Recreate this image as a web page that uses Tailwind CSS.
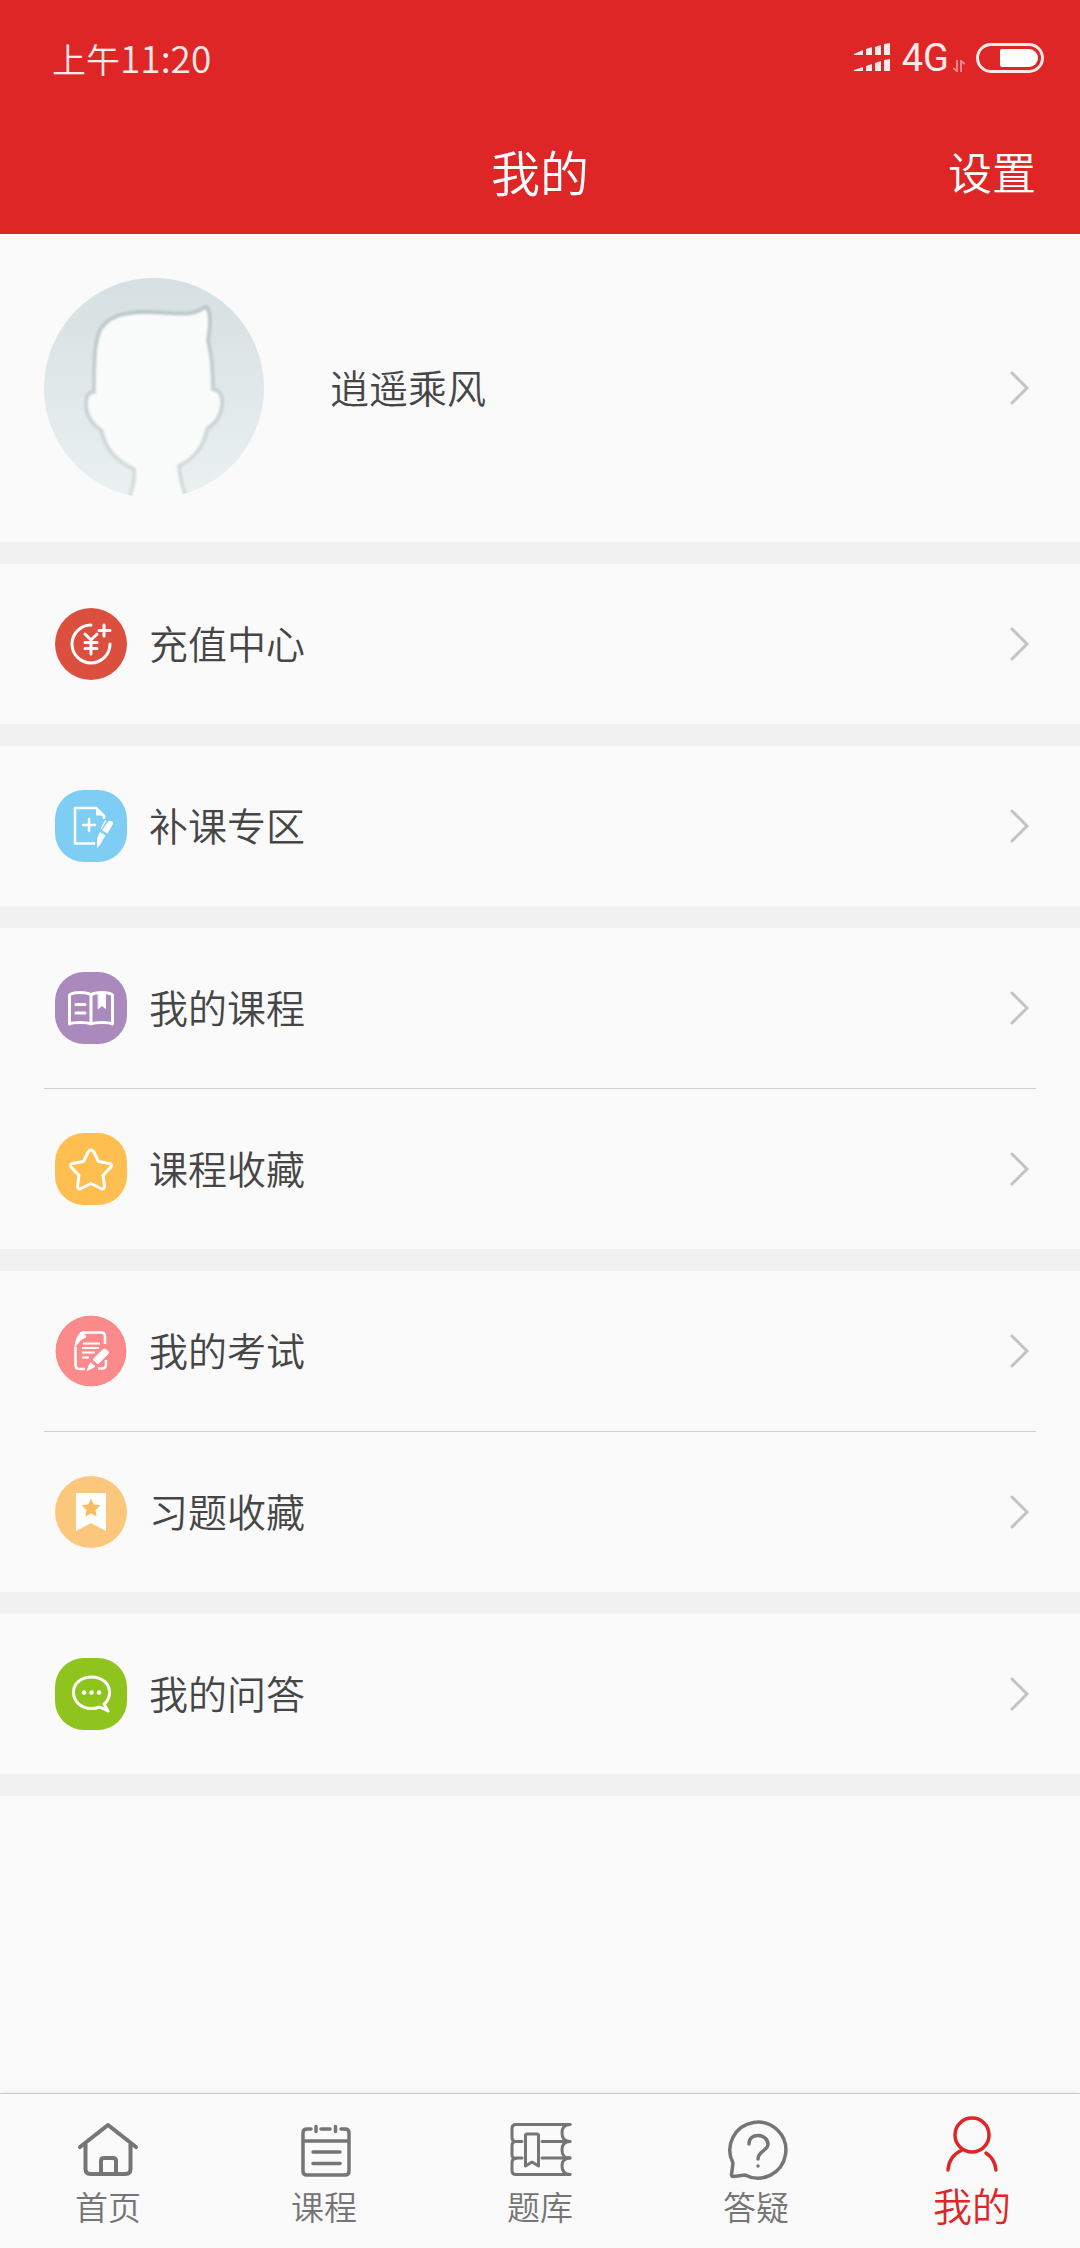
<!DOCTYPE html>
<html lang="zh-CN">
<head>
    <meta charset="UTF-8">
    <meta name="viewport" content="width=device-width, initial-scale=1.0">
    <title>我的</title>
    <script src="https://cdn.jsdelivr.net/npm/@tailwindcss/browser@4"></script>
    <style>
        body { font-family: 'Noto Sans CJK SC', sans-serif; font-weight: 350; }
    </style>
</head>
<body class="bg-[#fafafa] text-[#464646] min-h-screen flex flex-col">

    <!-- Iconos compartidos -->
    <svg class="hidden">
        <symbol id="chevron" viewBox="0 0 20 34">
            <path d="M2 2l15 15L2 32" fill="none" stroke="#c3c3c3" stroke-width="3" stroke-linecap="round"/>
        </symbol>
    </svg>

    <header class="bg-[#de2626] text-white">
        <div class="flex items-center justify-between h-[116px] pl-[52px] pr-9 text-white/90">
            <span class="text-[34px] leading-10">上午<span class="text-[37px]">11:20</span></span>
            <div class="flex items-center">
                <svg class="w-9 h-[30px] mr-3" viewBox="0 0 36 30" fill="currentColor">
                    <path d="M0 11l9-4v5H0zM12 6l6-2v8h-6zM21 4l6-2v10h-6zM30 1l6-1v12h-6z"/>
                    <path d="M0 27l9-3v4H0zM12 23l6-2v7h-6zM21 20l6-2v10h-6zM30 17l6-1v12h-6z"/>
                </svg>
                <span class="font-['Roboto'] font-normal text-[38px] leading-10">4G</span>
                <svg class="w-3 h-3 mt-4 ml-1 opacity-50" viewBox="0 0 12 12" fill="none" stroke="currentColor" stroke-width="2">
                    <path d="M4 0v11L0 8M8 12V1l4 3"/>
                </svg>
                <svg class="w-[68px] h-[30px] ml-[11px]" viewBox="0 0 68 30">
                    <rect x="1.5" y="1.5" width="65" height="27" rx="13.5" fill="none" stroke="currentColor" stroke-width="3"/>
                    <path d="M26 6h27a9 9 0 0 1 0 18H26a2 2 0 0 1-2-2V8a2 2 0 0 1 2-2z" fill="#fff"/>
                </svg>
            </div>
        </div>
        <div class="grid grid-cols-3 items-center h-[118px] px-11 pb-2">
            <h1 class="col-start-2 text-center text-[49px] leading-[60px] font-[350]">我的</h1>
            <button type="button" class="justify-self-end text-[44px] leading-[60px]">设置</button>
        </div>
    </header>

    <main class="flex-1 text-[39px] leading-[56px]">
        <a href="#perfil" class="flex items-center h-[308px] px-11">
            <svg class="w-[220px] h-[220px] rounded-full" viewBox="0 0 220 220">
                <defs>
                    <linearGradient id="fondo" x1="0" y1="0" x2="0" y2="1">
                        <stop offset="0" stop-color="#d6dfe1"/>
                        <stop offset="1" stop-color="#ebf1f1"/>
                    </linearGradient>
                    <linearGradient id="borde" x1="0" y1="0" x2="0" y2="1">
                        <stop offset="0" stop-color="#bac7c8"/>
                        <stop offset="1" stop-color="#d9dfdf"/>
                    </linearGradient>
                    <filter id="suave" x="-10%" y="-10%" width="120%" height="120%"><feGaussianBlur stdDeviation="1.2"/></filter>
                </defs>
                <rect width="220" height="220" fill="url(#fondo)"/>
                <path filter="url(#suave)" d="M50 114C50 88 50 68 55 54C62 40 76 34 102 34C122 34 136 37 147 35C155 34 159 29 163 29C167 36 167 46 164 62C168 78 169 94 169 111C176 112 179 118 178 127C177 139 171 146 163 151C160 170 149 181 135 188C136 200 138 210 144 224L83 224C89 212 91 202 90 191C72 183 62 172 57 152C48 146 42 138 42 126C42 118 44 114 50 114Z" fill="#fafcfb" stroke="url(#borde)" stroke-width="4"/>
            </svg>
            <span class="ml-[66px] flex-1 pb-1">逍遥乘风</span>
            <svg class="w-5 h-[34px] mr-[6px]"><use href="#chevron"/></svg>
        </a>

        <a href="#recarga" class="flex items-center h-[182px] border-t-[22px] border-[#f1f1f1] pl-[55px] pr-[50px]">
            <svg class="w-[72px] h-[72px]" viewBox="0 0 72 72" fill="none" stroke="#fff" stroke-width="3" stroke-linecap="round">
                <circle cx="36" cy="36" r="36" fill="#db4f3f" stroke="none"/>
                <path d="M36 17A19 19 0 1 0 55 36M49 17v11M44 22.500h11M30 26l6 6 6-6M36 32v14M30 34.500h12M30 40.500h12"/>
            </svg>
            <span class="ml-[22px] flex-1 pb-1">充值中心</span>
            <svg class="w-5 h-[34px]"><use href="#chevron"/></svg>
        </a>

        <a href="#repaso" class="flex items-center h-[182px] border-t-[22px] border-[#f1f1f1] pl-[55px] pr-[50px]">
            <svg class="w-[72px] h-[72px]" viewBox="0 0 72 72" fill="none" stroke="#fff" stroke-width="2.500" stroke-linecap="round" stroke-linejoin="round">
                <rect width="72" height="72" rx="29" fill="#7ecef4" stroke="none"/>
                <path d="M40 53.500H20V18H41l8 8v3" stroke-linecap="butt"/>
                <path d="M41.500 18v7h7.500z" fill="#fff" stroke-width="1"/>
                <path d="M34 29v12M28 35h12"/>
                <path d="M52.500 32.500q2-3 4-1.500q2.500 1 1 4l-5 8.500-5.500-3.200zM45 42l5.500 3.200-5 8.800-3.500 4v-9.500z" fill="#fff" stroke="none"/>
                <path d="M50.500 31l-4 7" stroke-width="1.500"/>
            </svg>
            <span class="ml-[22px] flex-1 pb-1">补课专区</span>
            <svg class="w-5 h-[34px]"><use href="#chevron"/></svg>
        </a>

        <section class="border-t-[22px] border-[#f1f1f1]">
            <a href="#cursos" class="flex items-center h-40 pl-[55px] pr-[50px]">
                <svg class="w-[72px] h-[72px]" viewBox="0 0 72 72" fill="none" stroke="#fff" stroke-width="3" stroke-linecap="round" stroke-linejoin="round">
                    <rect width="72" height="72" rx="29" fill="#aa8abd" stroke="none"/>
                    <path d="M36 23Q33 20.500 25 20.500T14.500 23V52Q17 50.500 25 50.500T36 52Q39 50.500 47 50.500T57.500 52V23Q55 20.500 47 20.500T36 23ZM36 23V52"/>
                    <path d="M21 32.500h9M21 41h9"/>
                    <path d="M43.500 21h7v15.500l-3.500-3-3.500 3z" fill="#fff" stroke-width="1"/>
                </svg>
                <span class="ml-[22px] flex-1 pb-1">我的课程</span>
                <svg class="w-5 h-[34px]"><use href="#chevron"/></svg>
            </a>
            <hr class="mx-11 border-[#cfcfcf]">
            <a href="#cursos-favoritos" class="flex items-center h-40 pl-[55px] pr-[50px]">
                <svg class="w-[72px] h-[72px]" viewBox="0 0 72 72" fill="none" stroke="#fff" stroke-width="3" stroke-linejoin="round">
                    <rect width="72" height="72" rx="29" fill="#ffbe50" stroke="none"/>
                    <path d="M33.500 18.500Q36 15.500 38.500 18.500L43.500 28.500L54.500 30.500Q58 31.500 55.500 34.500L48 42.500L49.500 53Q49.500 57 46 55.500L36 50.500L26 55.500Q22.500 57 22.500 53L24 42.500L16.500 34.500Q14 31.500 17.500 30.500L28.500 28.500Z"/>
                </svg>
                <span class="ml-[22px] flex-1 pb-1">课程收藏</span>
                <svg class="w-5 h-[34px]"><use href="#chevron"/></svg>
            </a>
        </section>

        <section class="border-t-[22px] border-[#f1f1f1]">
            <a href="#examenes" class="flex items-center h-40 pl-[55px] pr-[50px]">
                <svg class="w-[72px] h-[72px]" viewBox="0 0 72 72" fill="none" stroke="#fff" stroke-linejoin="round">
                    <circle cx="36" cy="36" r="36" fill="#fc8a8a"/>
                    <path d="M27 17.500h19q4 0 4 4V29M20.500 32V50q0 4 4 4H30M43 53.500h4q4 0 4-4V45" stroke-width="2.500"/>
                    <path d="M26 17q4 1 5 5l-5 2.500q-3 4-6 7 0-8 6-14.500z" fill="#fff" stroke-width="1"/>
                    <path d="M28 28.500h17M27 33h17M27 37.500h13M27 42.500h7" stroke-width="2"/>
                    <path d="M48 34.500q1.500-1 3 0l2 2q1 1.500 0 2.500L43 49l-5-4.500zM35.500 47.500l4.500 4-8 4z" fill="#fff" stroke-width="1"/>
                </svg>
                <span class="ml-[22px] flex-1 pb-1">我的考试</span>
                <svg class="w-5 h-[34px]"><use href="#chevron"/></svg>
            </a>
            <hr class="mx-11 border-[#cfcfcf]">
            <a href="#ejercicios" class="flex items-center h-40 pl-[55px] pr-[50px]">
                <svg class="w-[72px] h-[72px]" viewBox="0 0 72 72">
                    <circle cx="36" cy="36" r="36" fill="#fac77c"/>
                    <path d="M21 17h30v38l-15-8-15 8z" fill="#fff"/>
                    <path d="M36 22.500l2.800 6 6.700.8-5 4.700 1.200 6.500L36 37.500l-5.700 3 1.200-6.500-5-4.700 6.700-.8z" fill="#fabc62"/>
                </svg>
                <span class="ml-[22px] flex-1 pb-1">习题收藏</span>
                <svg class="w-5 h-[34px]"><use href="#chevron"/></svg>
            </a>
        </section>

        <a href="#preguntas" class="flex items-center h-[204px] border-y-[22px] border-[#f1f1f1] pl-[55px] pr-[50px]">
            <svg class="w-[72px] h-[72px]" viewBox="0 0 72 72" fill="none" stroke="#fff" stroke-width="3" stroke-linejoin="round">
                <rect width="72" height="72" rx="29" fill="#8fc41f" stroke="none"/>
                <path d="M49 46C53 43 54.500 39 54.500 34.500C54.500 25.500 47 19 36.500 19S18.500 25.500 18.500 34.500S26 50.500 36.500 50.500Q41 50.500 45 49L53 53Z"/>
                <path d="M29 34.500h.1M36.500 34.500h.1M44 34.500h.1" stroke-width="4.500" stroke-linecap="round"/>
            </svg>
            <span class="ml-[22px] flex-1 pb-1">我的问答</span>
            <svg class="w-5 h-[34px]"><use href="#chevron"/></svg>
        </a>
    </main>

    <nav class="grid grid-cols-5 h-[155px] border-t border-[#c8c8c8] shadow-[0_-1px_6px_rgba(0,0,0,0.06)] text-[#757575] text-[33px] leading-[46px]">
        <a href="#inicio" class="flex flex-col items-center justify-end pb-[19px]">
            <svg class="w-16 h-16 mb-0.5" viewBox="0 0 64 64" fill="none" stroke="currentColor" stroke-width="4" stroke-linecap="round" stroke-linejoin="round">
                <path d="M4 30L32 8l28 22M9.500 27v25q0 5 5 5h35q5 0 5-5V27M25 56V44q0-3 3-3h9q3 0 3 3v12"/>
            </svg>
            <span>首页</span>
        </a>
        <a href="#clases" class="flex flex-col items-center justify-end pb-[19px]">
            <svg class="w-16 h-16 mb-0.5" viewBox="0 0 64 64" fill="none" stroke="currentColor" stroke-width="3.500" stroke-linecap="round">
                <path d="M19 12h-4q-4 0-4 4v38q0 4 4 4h38q4 0 4-4v-38q0-4-4-4h-4M29 12h9M24 9.500v5M43.500 9.500v5M11 24h46M21 35h27M21 46.500h27"/>
            </svg>
            <span>课程</span>
        </a>
        <a href="#banco" class="flex flex-col items-center justify-end pb-[19px]">
            <svg class="w-16 h-16 mb-0.5" viewBox="0 0 64 64" fill="none" stroke="currentColor" stroke-width="3" stroke-linecap="round" stroke-linejoin="round">
                <path d="M62 7.500H8q-4 0-4 4v9q0 4 4 4-4 0-4 4v9q0 4 4 4-4 0-4 4v8q0 4 4 4h54M8 24.500h6M34 24.500h28M8 41h6M34 41h28"/>
                <path d="M62 7.500q-8 0-8 8.500t8 8.500q-8 0-8 8.500t8 8q-8 0-8 8t8 8.500"/>
                <path d="M17.500 49V18.500q0-1.500 1.500-1.500h10q1.500 0 1.500 1.500V49L24 45z"/>
            </svg>
            <span>题库</span>
        </a>
        <a href="#dudas" class="flex flex-col items-center justify-end pb-[19px]">
            <svg class="w-16 h-16 mb-0.5" viewBox="0 0 64 64" fill="none" stroke="currentColor" stroke-width="3.500" stroke-linecap="round" stroke-linejoin="round">
                <path d="M21 58A28 28 0 1 0 9 46L7.500 57.500q0 2 2 2z"/>
                <path d="M25 27C25 21 29 18.500 34 18.500S44 22 44 27C44 34 34 34 34 42M34 49v.1"/>
            </svg>
            <span>答疑</span>
        </a>
        <a href="#yo" class="flex flex-col items-center justify-end pb-[19px] text-[#de2626] text-[39px] leading-[50px]" aria-current="page">
            <svg class="w-16 h-16 mb-1" viewBox="0 0 64 64" fill="none" stroke="currentColor" stroke-width="3.500" stroke-linecap="round">
                <circle cx="32" cy="24" r="17"/>
                <path d="M8 59Q9 45 22 39M46 42Q55 48 56 59"/>
            </svg>
            <span>我的</span>
        </a>
    </nav>

</body>
</html>
